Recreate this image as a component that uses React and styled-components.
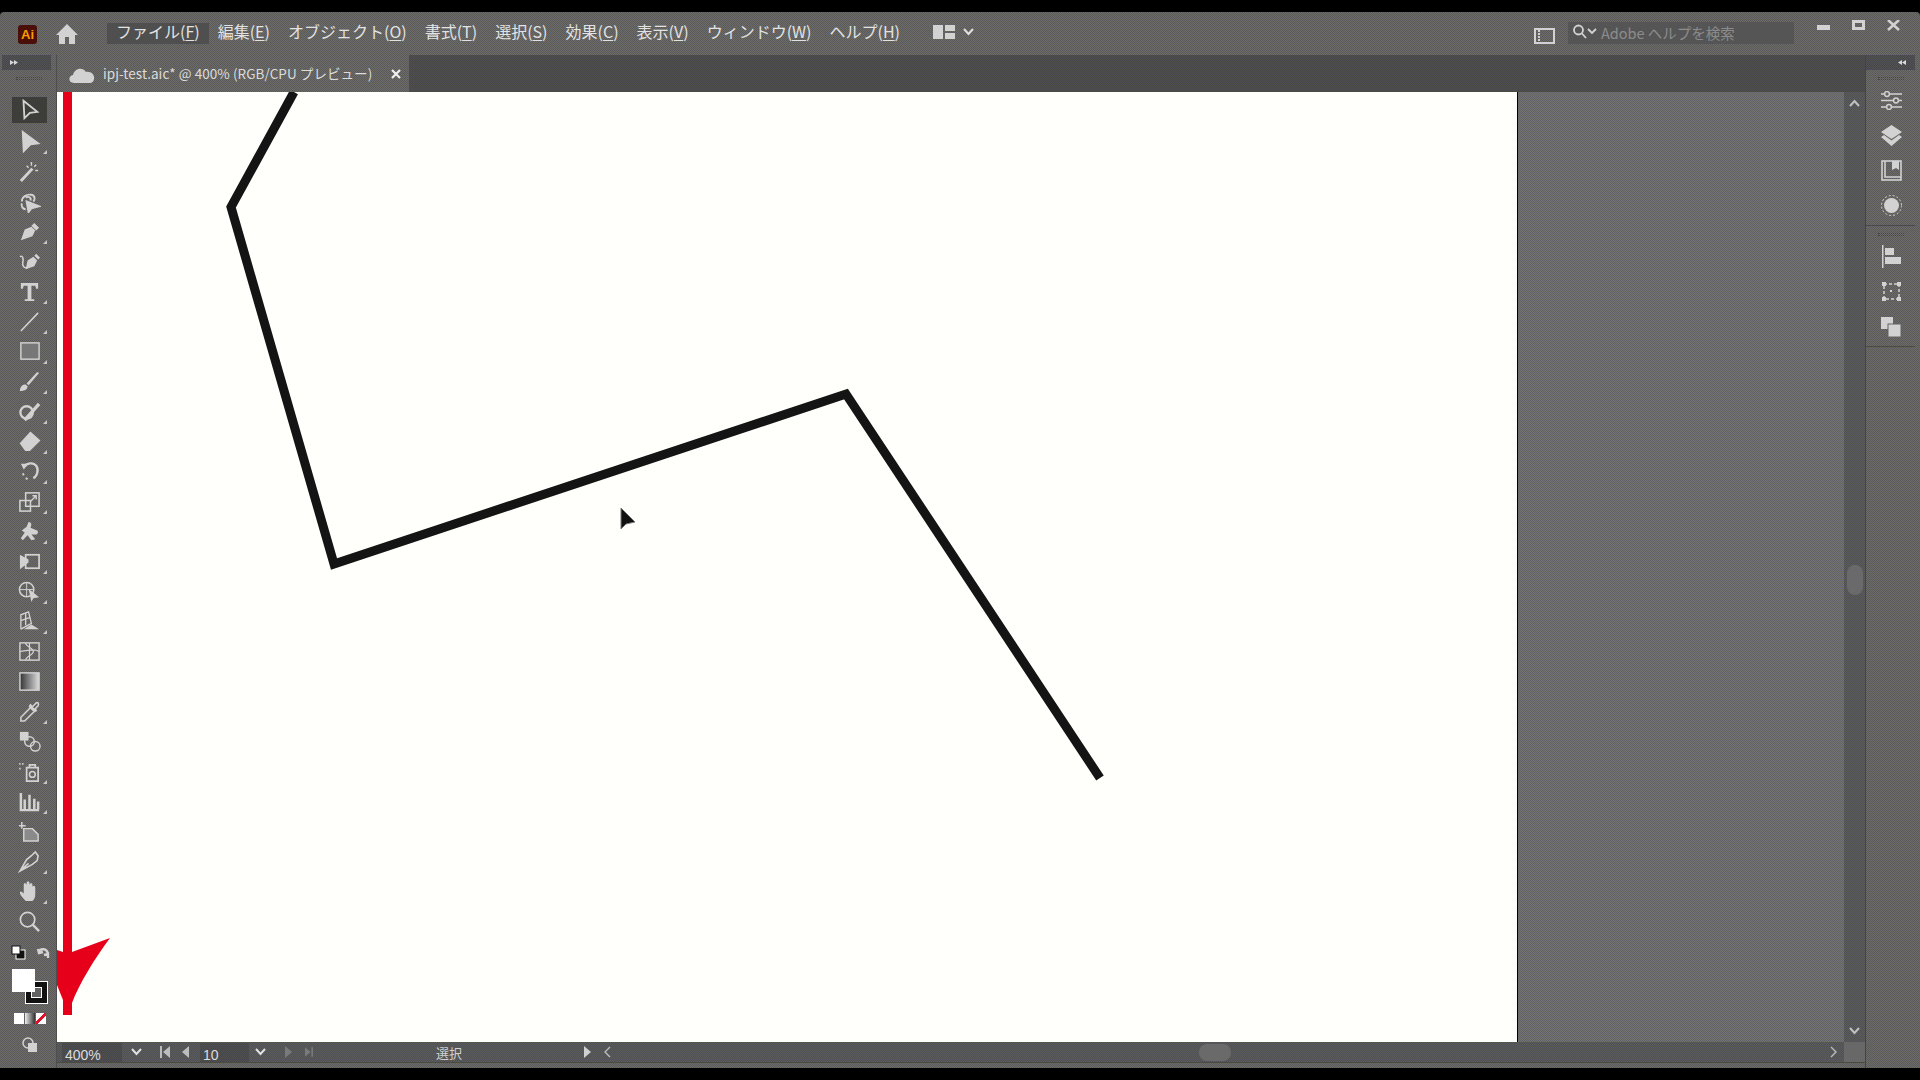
import React from "react";
import styled, { createGlobalStyle, css } from "styled-components";

const GlobalStyle = createGlobalStyle`
  html, body {
    margin: 0;
    padding: 0;
    background: #000;
  }
  body {
    width: 1920px;
    height: 1080px;
    overflow: hidden;
    font-family: "Noto Sans CJK JP", "Liberation Sans", sans-serif;
  }
`;

const ICON = "#d2d2d2";

// the reference is a dithered gif, so the chrome is a 1px checker of two greys
const dither = (a, b) => css`
  background-color: ${a};
  background-image: conic-gradient(${a} 25%, ${b} 0 50%, ${a} 0 75%, ${b} 0);
  background-size: 2px 2px;
`;

const Screen = styled.div`
  width: 1920px;
  height: 1080px;
  padding: 12px 0;
  box-sizing: border-box;
  background: #000;
`;

const Win = styled.div`
  height: 1056px;
  display: flex;
  flex-direction: column;
  ${dither("#6c6c62", "#5a5a60")}
  border-radius: 4px 4px 0 0;
`;

const TitleBar = styled.div`
  height: 43px;
  flex: none;
  display: flex;
  align-items: center;
  padding-left: 18px;
  color: #e2e2e2;
`;

const AppLogo = styled.div`
  width: 19px;
  height: 19px;
  background: #4a0f08;
  border-radius: 3px;
  color: #ff9a00;
  font: bold 13px/19px "Liberation Sans", sans-serif;
  text-align: center;
  margin-top: 2px;
`;

const HomeBtn = styled.div`
  margin-left: 18px;
  width: 24px;
  height: 24px;
`;

const Menu = styled.div`
  display: flex;
  margin-left: 28px;
`;

const MenuItem = styled.div`
  height: 21px;
  padding: 0 9px;
  font-size: 16px;
  line-height: 17px;
  white-space: nowrap;
  background: ${(p) => (p.$active ? "#4f4f4f" : "transparent")};
  u {
    text-underline-offset: 2px;
  }
`;

const Arrange = styled.div`
  margin: -3px 0 0 24px;
  display: flex;
  align-items: center;
  gap: 8px;
`;

const TitleRight = styled.div`
  margin-left: auto;
  display: flex;
  align-items: flex-start;
  height: 100%;
`;

const PanelIcon = styled.div`
  margin-top: 13px;
  width: 21px;
  height: 16px;
`;

const SearchBox = styled.div`
  width: 226px;
  height: 22px;
  margin: 10px 0 0 13px;
  background: #555555;
  display: flex;
  align-items: center;
  padding: 0 0 2px 4px;
  box-sizing: border-box;
  color: #8c8c8c;
  font-size: 14.5px;
  white-space: nowrap;
  gap: 3px;
`;

const WinBtns = styled.div`
  display: flex;
  width: 126px;
  padding: 8px 0 0 23px;
  box-sizing: border-box;
  gap: 22px;
`;

const Body = styled.div`
  flex: 1;
  display: flex;
  min-height: 0;
`;

const LeftDock = styled.div`
  width: 57px;
  flex: none;
  display: flex;
  flex-direction: column;
  align-items: center;
  border-right: 1px solid #4e4e4e;
  padding-left: 2px;
  box-sizing: border-box;
`;

const DockHead = styled.div`
  height: 15px;
  width: 49px;
  align-self: flex-start;
  ${dither("#525250", "#46464e")}
  display: flex;
  align-items: center;
  justify-content: ${(p) => p.$justify};
  padding: 0 9px 0 8px;
  box-sizing: border-box;
  flex: none;
`;

const Grip = styled.div`
  width: 26px;
  height: 3px;
  margin: 7px 0 3px;
  border-top: 1px dotted #444;
  border-bottom: 1px dotted #444;
  box-sizing: border-box;
  flex: none;
`;

const ToolList = styled.div`
  display: flex;
  flex-direction: column;
  align-items: center;
  margin-top: 14px;
`;

const ToolBtn = styled.div`
  position: relative;
  width: 35px;
  height: ${(p) => (p.$active ? 26 : 30)}px;
  margin: ${(p) => (p.$active ? "0 0 3px" : "0")};
  display: flex;
  align-items: center;
  justify-content: center;
  background: ${(p) => (p.$active ? "#3d3d3a" : "transparent")};
  &::after {
    content: "";
    display: ${(p) => (p.$corner ? "block" : "none")};
    position: absolute;
    right: 0;
    bottom: 2px;
    border-style: solid;
    border-width: 0 0 4px 4px;
    border-color: transparent transparent #c8c8c8 transparent;
  }
`;

const ColorArea = styled.div`
  width: 44px;
  margin-top: 9px;
  flex: none;
`;

const MiniRow = styled.div`
  display: flex;
  justify-content: space-between;
  align-items: center;
  padding-left: 4px;
`;

const Swatches = styled.div`
  position: relative;
  height: 38px;
  margin-top: 9px;
`;

const FillSwatch = styled.div`
  position: absolute;
  left: 5px;
  top: 0;
  width: 23px;
  height: 23px;
  background: #fff;
  z-index: 1;
`;

const StrokeSwatch = styled.div`
  position: absolute;
  left: 18px;
  top: 12px;
  width: 23px;
  height: 23px;
  box-sizing: border-box;
  background: #111;
  border: 1px solid #fff;
  &::after {
    content: "";
    position: absolute;
    left: 5px;
    top: 5px;
    width: 11px;
    height: 11px;
    border: 1px solid #fff;
    box-sizing: border-box;
    background: #626262;
  }
`;

const ModeRow = styled.div`
  display: flex;
  gap: 1px;
  margin: 6px 0 0 7px;
`;

const ModeBox = styled.div`
  width: 10px;
  height: 11px;
  background: ${(p) => p.$bg};
`;

const ScreenMode = styled.div`
  margin: 10px 0 0 15px;
`;

const Center = styled.div`
  flex: 1;
  min-width: 0;
  display: flex;
  flex-direction: column;
`;

const TabStrip = styled.div`
  height: 37px;
  flex: none;
  ${dither("#505049", "#46464e")}
  display: flex;
`;

const Tab = styled.div`
  width: 352px;
  ${dither("#6c6c62", "#5a5a60")}
  display: flex;
  align-items: center;
  padding-left: 12px;
  box-sizing: border-box;
  color: #dcdcdc;
  font-size: 13.5px;
  letter-spacing: 0.06px;
  white-space: nowrap;
`;

const TabName = styled.span`
  margin: -2px 0 0 8px;
  width: 288px;
`;

const Stage = styled.div`
  flex: 1;
  min-height: 0;
  display: flex;
`;

const Artboard = styled.div`
  position: relative;
  width: 1460px;
  background: #fffffb;
  border-right: 1px solid #000;
  overflow: hidden;
  flex: none;
`;

const Drawing = styled.svg`
  position: absolute;
  left: 0;
  top: 0;
`;

const Pasteboard = styled.div`
  flex: 1;
  ${dither("#74746a", "#62626e")}
`;

const VScroll = styled.div`
  width: 21px;
  flex: none;
  ${dither("#5c5c56", "#50505a")}
  display: flex;
  flex-direction: column;
  align-items: center;
  justify-content: space-between;
  padding: 7px 0;
  box-sizing: border-box;
`;

const VThumb = styled.div`
  width: 16px;
  height: 30px;
  margin-top: 26px;
  border-radius: 8px;
  background: #6a6a6a;
`;

const StatusBar = styled.div`
  height: 20px;
  flex: none;
  ${dither("#5c5c56", "#50505a")}
  display: flex;
  align-items: center;
  color: #dcdcdc;
  font-size: 13px;
  padding-left: 5px;
`;

const StatField = styled.div`
  width: ${(p) => p.$w}px;
  height: 19px;
  margin-left: ${(p) => p.$ml || 0}px;
  ${dither("#50504a", "#464650")}
  font: 14px/24px "Liberation Sans", sans-serif;
  padding-left: 3px;
  box-sizing: border-box;
  flex: none;
  overflow: hidden;
`;

const StatIcon = styled.div`
  width: ${(p) => p.$w}px;
  display: flex;
  justify-content: center;
  flex: none;
  opacity: ${(p) => (p.$off ? 0.35 : 1)};
`;

const StatLabel = styled.div`
  width: 248px;
  text-align: center;
  flex: none;
  margin-left: 12px;
  color: #d0d0d0;
`;

const HScroll = styled.div`
  flex: 1;
  display: flex;
  align-items: center;
  padding-left: 3px;
  height: 100%;
`;

const HThumb = styled.div`
  width: 32px;
  height: 17px;
  border-radius: 8px;
  background: #6a6a6a;
  margin-left: 588px;
`;

const HEnd = styled.div`
  margin-left: auto;
  margin-right: 7px;
  display: flex;
`;

const Corner = styled.div`
  width: 21px;
  height: 100%;
  background: #686868;
  flex: none;
`;

const BottomEdge = styled.div`
  height: 6px;
  flex: none;
  border-top: 1px solid #4a4a44;
  box-sizing: border-box;
`;

const RightDock = styled.div`
  width: 55px;
  flex: none;
  display: flex;
  flex-direction: column;
  align-items: center;
  border-left: 1px solid #45453c;
  padding-right: 4px;
  box-sizing: border-box;
`;

const DockIcon = styled.div`
  height: 35px;
  display: flex;
  align-items: center;
  justify-content: center;
  flex: none;
`;

const DockRule = styled.div`
  width: 49px;
  height: 1px;
  align-self: flex-start;
  background: #4a4a44;
  margin-top: 2px;
  flex: none;
`;

const Ico = ({ size = 24, children }) => (
  <svg width={size} height={size} viewBox="0 0 24 24" fill="none" stroke={ICON} strokeWidth="2">
    {children}
  </svg>
);

// left tool bar, top to bottom
const tools = [
  { corner: false, d: <path d="M6 2 L21 14 L13 15 L7 21 Z" /> },
  { corner: true, d: <path d="M5 2 L21 14 L13 15 L6 22 Z" fill={ICON} /> },
  { d: <><path d="M3 22 L15 9" strokeWidth="3" /><path d="M14 2v4M19 5l-2 2M21 11h-3M9 6l2 2" strokeWidth="1.5" /></> },
  { d: <><path d="M9 12 L22 17 L14 19 L11 23 Z" fill={ICON} /><path d="M4 12c0-5 5-8 10-7 4 1 4 5 2 7M8 20c-3 0-5-3-4-6M8 8c3-2 6 0 5 3" /></> },
  { corner: true, d: <path d="M3 21 L7 10 L14 7 L18 11 L15 17 Z M14 6l3-3 5 5-3 3" fill={ICON} stroke="none" /> },
  { d: <><path d="M8 20 L10 11 L16 7 L20 11 L17 17 Z M17 6l2-2 4 4-2 2" fill={ICON} stroke="none" /><path d="M2 7c3-2 4 3 3 6s2 7 5 5" strokeWidth="1.6" /></> },
  { corner: true, d: <path d="M3 3h18v6h-2l-1-3h-4v14h3v2H7v-2h3V6H6L5 9H3z" fill={ICON} stroke="none" /> },
  { corner: true, d: <path d="M3 22 L21 3" strokeWidth="1.6" /> },
  { corner: true, d: <rect x="3" y="3" width="19" height="17" fill="#777" strokeWidth="1.5" /> },
  { corner: true, d: <path d="M2 22c0-5 3-7 6-7l2 2c0 4-4 5-8 5z M9 14 L20 2 L22 3 L11 16z" fill={ICON} stroke="none" /> },
  { corner: true, d: <><circle cx="9" cy="13" r="6.5" strokeWidth="2.4" /><path d="M7 21 L22 4" strokeWidth="3.4" /></> },
  { corner: true, d: <path d="M3 14 L13 3 L22 11 L12 21 L8 21Z" fill={ICON} stroke="#d2d2d2" /> },
  { corner: true, d: <><path d="M6 7c3-4 10-5 13-1 3 4 1 11-3 13" strokeWidth="2.4" /><path d="M3 4 L11 4 L6 10Z" fill={ICON} stroke="none" /><path d="M5 14l1 2M8 19l2 1" strokeWidth="2" /></> },
  { corner: true, d: <><rect x="2" y="11" width="11" height="11" strokeWidth="1.6" /><rect x="8" y="3" width="14" height="14" strokeWidth="1.6" /><path d="M13 12 L19 6M15 6h4v4" strokeWidth="1.4" /></> },
  { corner: true, d: <path d="M11 2c4 0 3 4 2 6l7 3c2 2 0 5-3 4l-3 0 4 5-4 1-4-5-5 5-2-2 4-6-3-2 5-4z" fill={ICON} stroke="none" /> },
  { corner: true, d: <><path d="M2 5 L11 10 L11 13 L2 20Z" fill={ICON} stroke="none" /><rect x="8" y="5" width="14" height="14" strokeWidth="1.8" /></> },
  { corner: true, d: <><circle cx="9" cy="10" r="7.5" strokeWidth="1.6" /><path d="M2 10h14M9 3v14" strokeWidth="1" /><path d="M11 9 L22 18 L16 19 L14 23Z" fill={ICON} stroke="none" /></> },
  { corner: true, d: <><path d="M3 20V5L11 2 L14 14 L3 20 M3 11 L12 8 M8 3v13" strokeWidth="1.4" /><path d="M6 20 L22 20 L14 15Z" fill={ICON} stroke="none" /></> },
  { d: <><rect x="2" y="3" width="20" height="18" strokeWidth="1.5" /><path d="M8 3c0 4 8 5 8 9s-8 5-8 9M2 12c6 0 14-4 20 0M12 3v18" strokeWidth="1.3" /></> },
  { d: <rect x="2" y="3" width="20" height="18" fill="url(#toolGrad)" strokeWidth="1.5" /> },
  { corner: true, d: <path d="M3 22 L3 18 L14 7 L18 11 L7 22Z M13 5l2 2 4-4c2-1 3 1 2 3l-3 3 1 2-2 1-5-5z" strokeWidth="1.6" /> },
  { d: <><rect x="2" y="2" width="9" height="9" fill={ICON} stroke="none" /><circle cx="12" cy="12" r="5" strokeWidth="1.5" /><circle cx="18" cy="17" r="5" strokeWidth="1.5" /></> },
  { corner: true, d: <><path d="M2 3v2M5 3v2M2 8v2" strokeWidth="1.5" /><path d="M9 8h12v14H9zM12 8V5h6v3" strokeWidth="1.8" /><circle cx="15" cy="15" r="3" strokeWidth="1.6" /></> },
  { corner: true, d: <path d="M3 3v18h19M7 10v10M12 5v15M17 9v11M21 12v8" strokeWidth="2.6" /> },
  { d: <><path d="M1 6h7M4 2v7" strokeWidth="1.6" /><path d="M6 9h9l6 6v7H6z" fill="#8a8a8a" strokeWidth="1.5" /></> },
  { corner: true, d: <path d="M2 22 L9 10 L14 6 L18 2 L21 6 L20 11 L15 15Z M2 22 L11 14" strokeWidth="1.7" /> },
  { corner: true, d: <path d="M8 22c-2-3-6-6-6-9 0-2 2-1 4 1V5c0-2 2-2 3 0V3c0-2 3-2 3 0v2c1-2 3-2 3 0v2c1-2 3-1 3 1v7c0 3-1 5-3 7z" fill={ICON} stroke="none" /> },
  { d: <><circle cx="10" cy="10" r="7.5" strokeWidth="1.8" /><path d="M15 15 L22 22" strokeWidth="2.6" /></> },
];

const menus = [
  ["ファイル(", "F", ")"],
  ["編集(", "E", ")"],
  ["オブジェクト(", "O", ")"],
  ["書式(", "T", ")"],
  ["選択(", "S", ")"],
  ["効果(", "C", ")"],
  ["表示(", "V", ")"],
  ["ウィンドウ(", "W", ")"],
  ["ヘルプ(", "H", ")"],
];

const Chevron = ({ up, color = "#e0e0e0" }) => (
  <svg width="11" height="8" viewBox="0 0 11 8" fill="none" stroke={color} strokeWidth="2">
    <path d={up ? "M1 7 L5.5 2 L10 7" : "M1 1 L5.5 6 L10 1"} />
  </svg>
);

const DoubleArrow = ({ left }) => (
  <svg width="8" height="5" viewBox="0 0 8 5" fill="#d8d8d8">
    <path d={left ? "M4 0v5L0 2.5zM8 0v5L4 2.5z" : "M0 0v5l4-2.5zM4 0v5l4-2.5z"} />
  </svg>
);

export default function App() {
  return (
    <>
      <GlobalStyle />
      <Screen>
        <Win>
          <TitleBar>
            <AppLogo>Ai</AppLogo>
            <HomeBtn>
              <svg width="24" height="24" viewBox="0 0 24 24" fill={ICON}>
                <path d="M12 2 L23 13 L20 13 L20 22 L14 22 L14 15 L10 15 L10 22 L4 22 L4 13 L1 13Z" />
              </svg>
            </HomeBtn>
            <Menu>
              {menus.map(([a, k, b], i) => (
                <MenuItem key={k} $active={i === 0}>
                  {a}
                  <u>{k}</u>
                  {b}
                </MenuItem>
              ))}
            </Menu>
            <Arrange>
              <svg width="22" height="14" viewBox="0 0 22 14" fill={ICON}>
                <rect x="0" y="0" width="10" height="14" />
                <rect x="12" y="0" width="10" height="6" />
                <rect x="12" y="8" width="10" height="6" />
              </svg>
              <Chevron />
            </Arrange>
            <TitleRight>
              <PanelIcon>
                <svg width="21" height="16" viewBox="0 0 21 16" fill="none" stroke={ICON} strokeWidth="2">
                  <rect x="1" y="1" width="19" height="14" />
                  <path d="M5 2v12" strokeDasharray="2 1" />
                </svg>
              </PanelIcon>
              <SearchBox>
                <svg width="26" height="16" viewBox="0 0 26 16" fill="none" stroke={ICON} strokeWidth="1.8">
                  <circle cx="6.5" cy="6" r="4.5" />
                  <path d="M10 9.5 L14 14M16 5 L20 9 L24 5" />
                </svg>
                Adobe ヘルプを検索
              </SearchBox>
              <WinBtns>
                <svg width="13" height="11" viewBox="0 0 13 11" fill={ICON}>
                  <rect x="0" y="5" width="13" height="5" />
                </svg>
                <svg width="13" height="11" viewBox="0 0 13 11" fill="none" stroke={ICON} strokeWidth="3">
                  <rect x="1.5" y="1.5" width="10" height="7" />
                </svg>
                <svg width="13" height="11" viewBox="0 0 13 11" fill="none" stroke={ICON} strokeWidth="2.6">
                  <path d="M1 0 L12 10M12 0 L1 10" />
                </svg>
              </WinBtns>
            </TitleRight>
          </TitleBar>

          <Body>
            <LeftDock>
              <DockHead $justify="flex-start">
                <DoubleArrow />
              </DockHead>
              <Grip />
              <ToolList>
                <svg width="0" height="0">
                  <defs>
                    <linearGradient id="toolGrad">
                      <stop offset="0" stopColor="#333" />
                      <stop offset="1" stopColor="#ddd" />
                    </linearGradient>
                  </defs>
                </svg>
                {tools.map((t, i) => (
                  <ToolBtn key={i} $active={i === 0} $corner={t.corner}>
                    <Ico size={i === 0 ? 22 : 23}>{t.d}</Ico>
                  </ToolBtn>
                ))}
              </ToolList>
              <ColorArea>
                <MiniRow>
                  <svg width="15" height="15" viewBox="0 0 15 15">
                    <rect x="5" y="5" width="9" height="9" fill="#111" stroke="#fff" />
                    <rect x="1" y="1" width="8" height="8" fill="#fff" stroke="#111" />
                  </svg>
                  <svg width="15" height="15" viewBox="0 0 15 15" fill="none" stroke={ICON} strokeWidth="2.4">
                    <path d="M3 7c1-4 8-4 9 2M2 4l1 4 4-1M12 13l0-4-4 1" />
                  </svg>
                </MiniRow>
                <Swatches>
                  <FillSwatch />
                  <StrokeSwatch />
                </Swatches>
                <ModeRow>
                  <ModeBox $bg="#fff" />
                  <ModeBox $bg="linear-gradient(90deg,#eee,#333)" />
                  <ModeBox $bg="linear-gradient(135deg,#fff 38%,#e0102a 40%,#e0102a 60%,#fff 62%)" />
                </ModeRow>
                <ScreenMode>
                  <svg width="16" height="16" viewBox="0 0 16 16">
                    <circle cx="6" cy="6" r="5" fill="none" stroke={ICON} strokeWidth="1.5" />
                    <rect x="6" y="6" width="9" height="9" fill={ICON} />
                  </svg>
                </ScreenMode>
              </ColorArea>
            </LeftDock>

            <Center>
              <TabStrip>
                <Tab>
                  <svg width="26" height="18" viewBox="0 0 26 18" fill={ICON}>
                    <path d="M5 18c-6 0-6-7-1-8 1-6 9-9 13-3 5-1 9 3 8 7 0 2-2 4-4 4z" />
                  </svg>
                  <TabName>ipj-test.aic* @ 400% (RGB/CPU プレビュー)</TabName>
                  <svg width="10" height="10" viewBox="0 0 10 10" stroke="#f0f0f0" strokeWidth="2.2">
                    <path d="M1 1 L9 9M9 1 L1 9" />
                  </svg>
                </Tab>
              </TabStrip>
              <Stage>
                <Artboard>
                  <Drawing width="1460" height="951" viewBox="0 0 1460 951">
                    <polyline
                      points="237,0 174,115 277,472 789,302 1043,686"
                      fill="none"
                      stroke="#141414"
                      strokeWidth="9"
                      strokeMiterlimit="10"
                    />
                    <path d="M6 0 H15 V860 L53 846 C38 866 22 892 15 911 V923 H6 V908 L0 893 V858 L6 860Z" fill="#e60019" />
                    <path d="M564 416 L564 437 L569 432 L578 430 Z" fill="#111" stroke="#777" strokeWidth="1" />
                  </Drawing>
                </Artboard>
                <Pasteboard />
                <VScroll>
                  <Chevron up color="#c0c0c0" />
                  <VThumb />
                  <Chevron color="#c0c0c0" />
                </VScroll>
              </Stage>
              <StatusBar>
                <StatField $w={60}>400%</StatField>
                <StatIcon $w={28}>
                  <Chevron />
                </StatIcon>
                <StatIcon $w={30}>
                  <svg width="10" height="12" viewBox="0 0 10 12" fill="#bcbcbc">
                    <path d="M0 0h2v12H0zM10 0v12L3 6z" />
                  </svg>
                </StatIcon>
                <StatIcon $w={10}>
                  <svg width="7" height="12" viewBox="0 0 7 12" fill="#bcbcbc">
                    <path d="M7 0v12L0 6z" />
                  </svg>
                </StatIcon>
                <StatField $w={49} $ml={10}>10</StatField>
                <StatIcon $w={22}>
                  <Chevron />
                </StatIcon>
                <StatIcon $w={34} $off>
                  <svg width="7" height="12" viewBox="0 0 7 12" fill="#bcbcbc">
                    <path d="M0 0v12L7 6z" />
                  </svg>
                </StatIcon>
                <StatIcon $w={8} $off>
                  <svg width="10" height="12" viewBox="0 0 10 12" fill="#bcbcbc">
                    <path d="M8 0h2v12H8zM0 0v12L7 6z" />
                  </svg>
                </StatIcon>
                <StatLabel>選択</StatLabel>
                <StatIcon $w={28}>
                  <svg width="7" height="12" viewBox="0 0 7 12" fill="#d0d0d0">
                    <path d="M0 0v12L7 6z" />
                  </svg>
                </StatIcon>
                <HScroll>
                  <svg width="7" height="12" viewBox="0 0 7 12" fill="none" stroke="#bcbcbc" strokeWidth="1.4">
                    <path d="M6 1 L1 6 L6 11" />
                  </svg>
                  <HThumb />
                  <HEnd>
                    <svg width="7" height="12" viewBox="0 0 7 12" fill="none" stroke="#bcbcbc" strokeWidth="1.4">
                      <path d="M1 1 L6 6 L1 11" />
                    </svg>
                  </HEnd>
                </HScroll>
                <Corner />
              </StatusBar>
              <BottomEdge />
            </Center>

            <RightDock>
              <DockHead $justify="flex-end">
                <DoubleArrow left />
              </DockHead>
              <Grip />
              <DockIcon>
                <svg width="21" height="19" viewBox="0 0 21 19" fill="none" stroke={ICON} strokeWidth="1.5">
                  <path d="M0 3h21M0 9.5h21M0 16h21" />
                  <circle cx="6" cy="3" r="2.4" fill="#626262" />
                  <circle cx="15" cy="9.5" r="2.4" fill="#626262" />
                  <circle cx="8" cy="16" r="2.4" fill="#626262" />
                </svg>
              </DockIcon>
              <DockIcon>
                <svg width="21" height="21" viewBox="0 0 21 21" fill={ICON}>
                  <path d="M10.5 0 L21 7 L10.5 14 L0 7Z" />
                  <path d="M0 12 L3 10 L10.5 15.5 L18 10 L21 12 L10.5 21Z" />
                </svg>
              </DockIcon>
              <DockIcon>
                <svg width="21" height="21" viewBox="0 0 21 21" fill="none" stroke={ICON} strokeWidth="1.6">
                  <rect x="1" y="1" width="19" height="19" />
                  <path d="M4 1v16h16" />
                  <path d="M11 1h7v9l-3-2-4 2z" fill={ICON} stroke="none" />
                </svg>
              </DockIcon>
              <DockIcon>
                <svg width="21" height="21" viewBox="0 0 21 21">
                  <circle cx="10.5" cy="10.5" r="7.5" fill={ICON} />
                  <circle cx="10.5" cy="10.5" r="10" fill="none" stroke={ICON} strokeWidth="1" strokeDasharray="2 2" />
                </svg>
              </DockIcon>
              <DockRule />
              <Grip />
              <DockIcon>
                <svg width="19" height="23" viewBox="0 0 19 23" fill={ICON}>
                  <rect x="0" y="0" width="1.5" height="23" />
                  <rect x="3" y="3" width="9" height="7" />
                  <rect x="3" y="12" width="16" height="7" />
                </svg>
              </DockIcon>
              <DockIcon>
                <svg width="19" height="19" viewBox="0 0 19 19" fill="none" stroke={ICON} strokeWidth="1.5">
                  <rect x="2" y="2" width="15" height="15" strokeDasharray="3 2" />
                  <g fill={ICON} stroke="none">
                    <rect x="0" y="0" width="4" height="4" />
                    <rect x="15" y="0" width="4" height="4" />
                    <rect x="0" y="15" width="4" height="4" />
                    <rect x="15" y="15" width="4" height="4" />
                    <rect x="8" y="8" width="2" height="2" />
                  </g>
                </svg>
              </DockIcon>
              <DockIcon>
                <svg width="20" height="20" viewBox="0 0 20 20">
                  <rect x="0" y="0" width="12" height="12" fill={ICON} />
                  <rect x="7" y="7" width="13" height="13" fill={ICON} stroke="#626262" strokeWidth="1" />
                </svg>
              </DockIcon>
              <DockRule />
            </RightDock>
          </Body>
        </Win>
      </Screen>
    </>
  );
}
